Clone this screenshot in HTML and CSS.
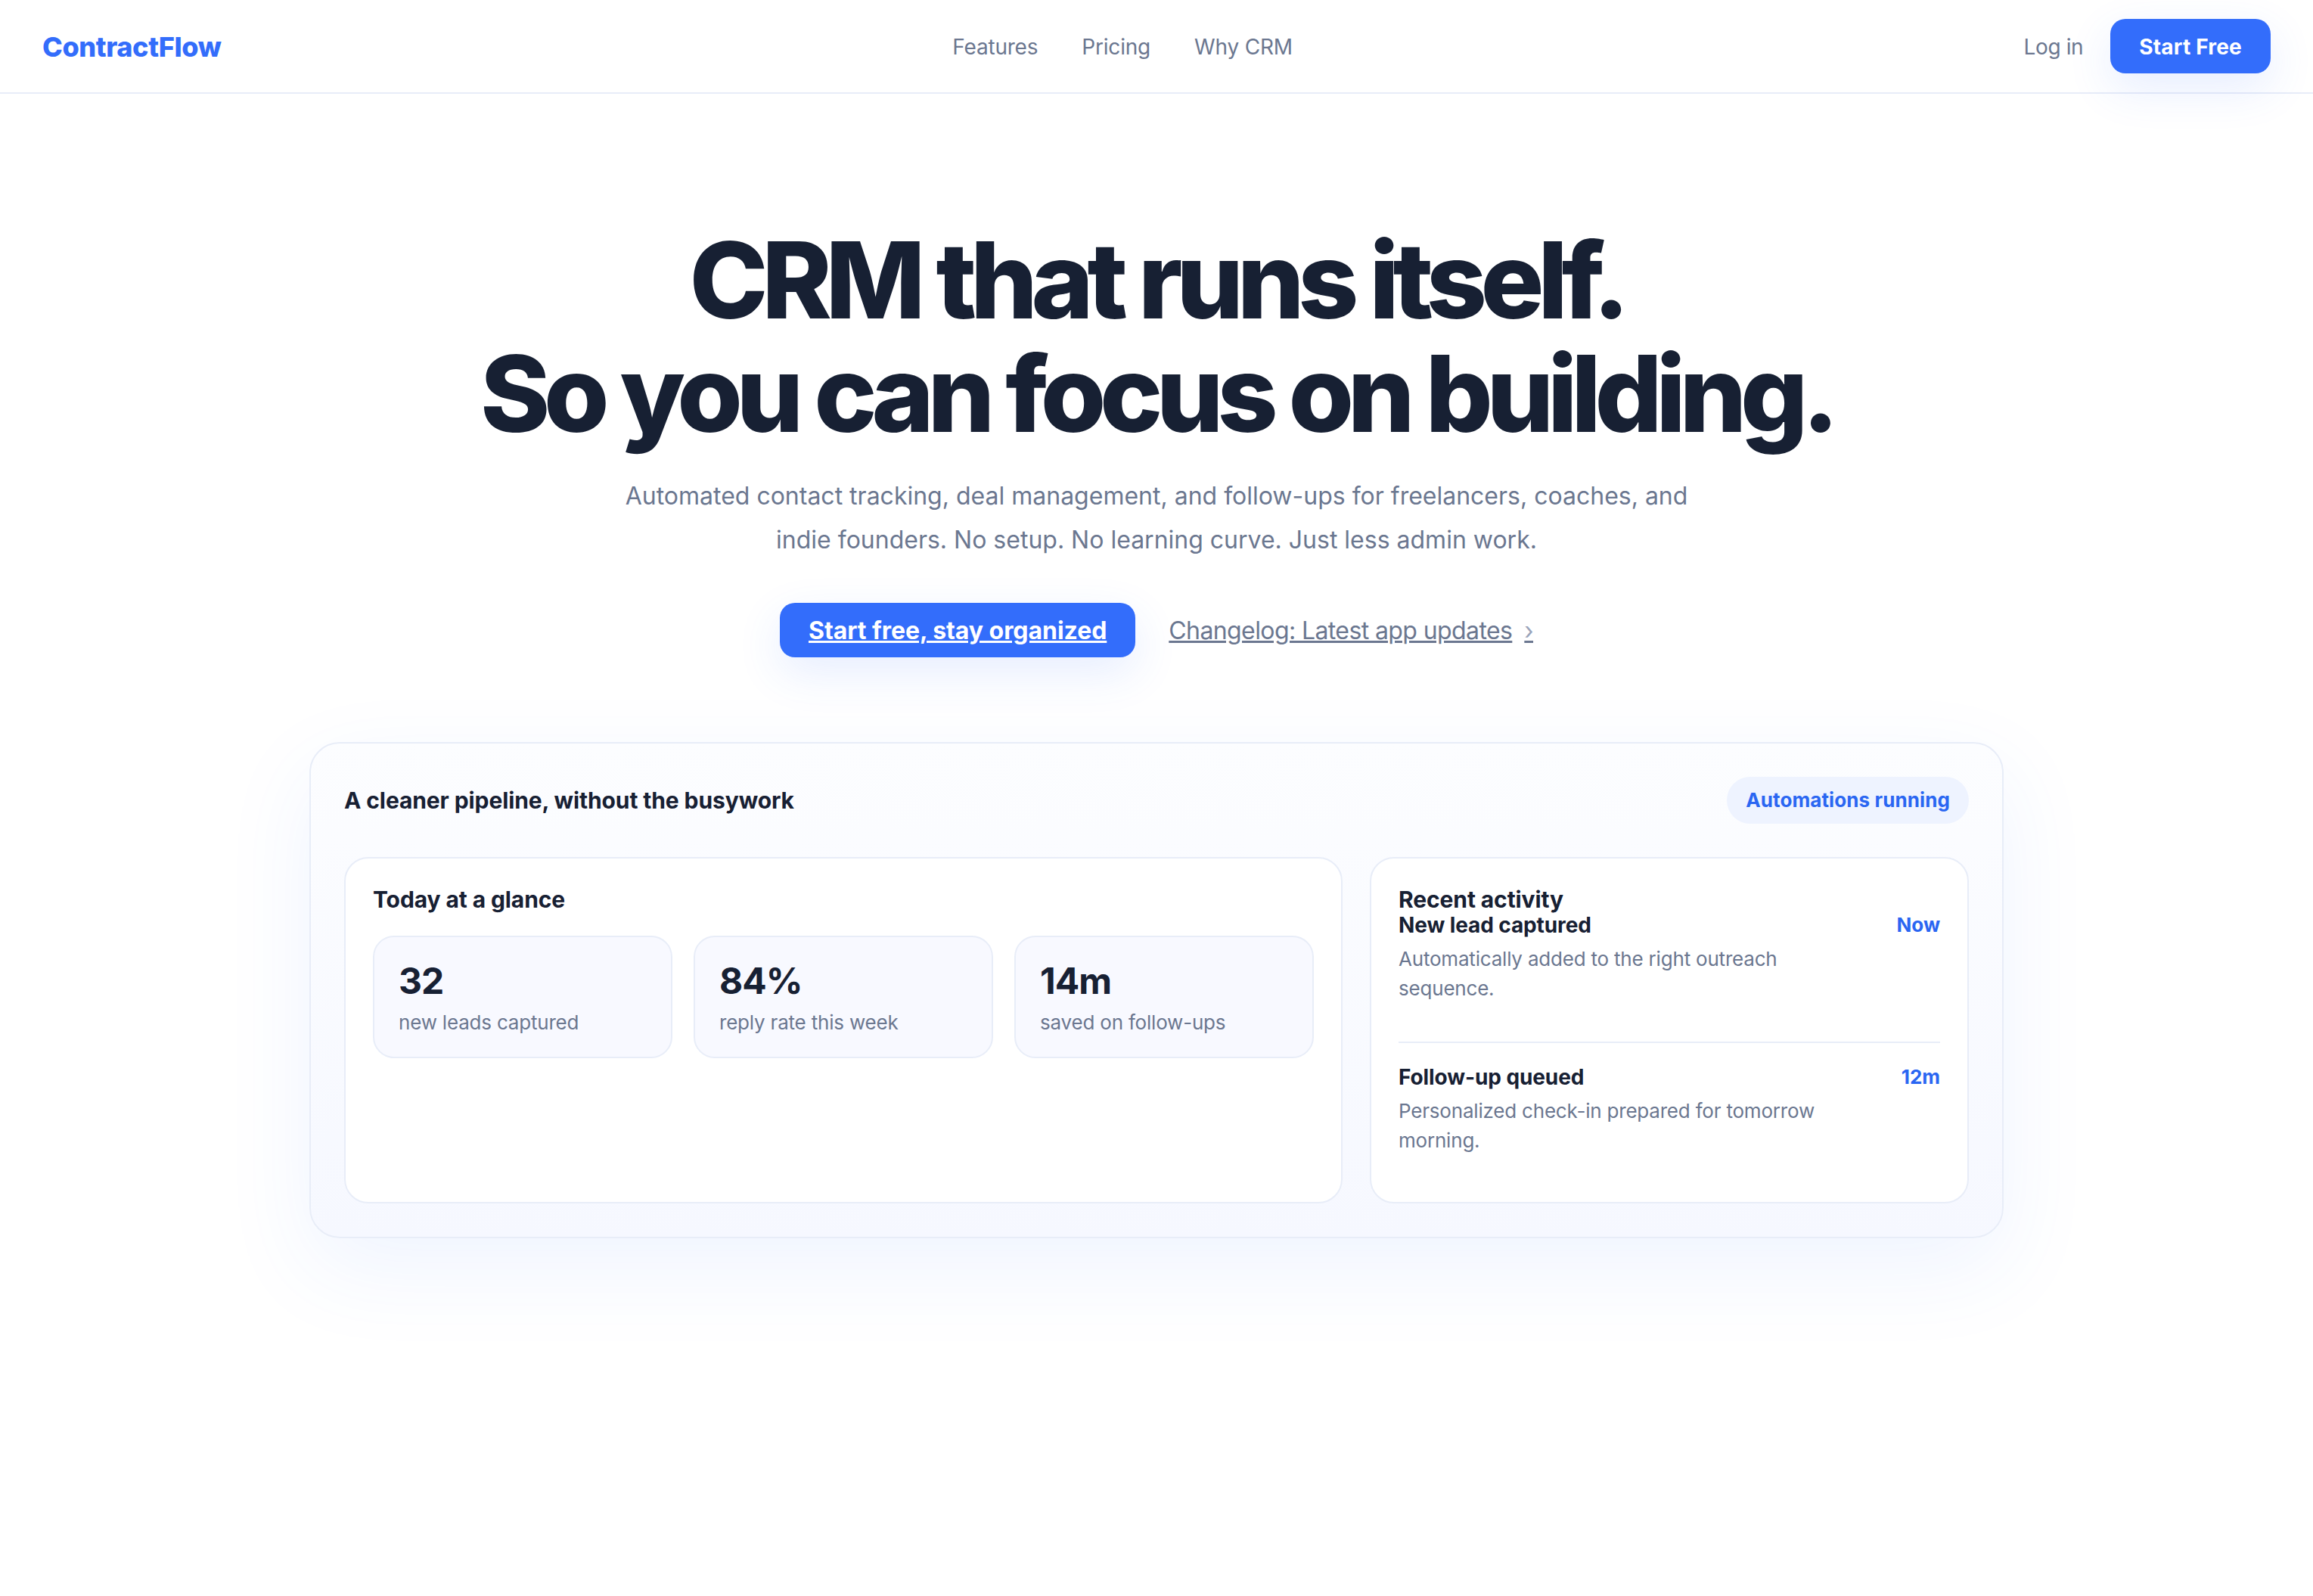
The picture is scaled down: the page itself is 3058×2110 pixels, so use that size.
FILE: index.html
```html
<!DOCTYPE html>
<html lang="en">
<head>
  <meta charset="UTF-8">
  <title>ContractFlow</title>
  <link rel="stylesheet" href="styles.css">
</head>
<body>

<header class="topbar">
  <a class="logo" href="#">ContractFlow</a>
  <nav class="nav">
    <a href="#">Features</a>
    <a href="#">Pricing</a>
    <a href="#">Why CRM</a>
  </nav>
  <div class="top-actions">
    <a class="login" href="#">Log in</a>
    <a class="btn" href="#">Start Free</a>
  </div>
</header>

<main>
  <section class="hero">
    <h1>CRM that runs itself.<br>So you can focus on building.</h1>
    <p class="lead">Automated contact tracking, deal management, and follow-ups for freelancers, coaches, and indie founders. No setup. No learning curve. Just less admin work.</p>
    <div class="cta">
      <a class="btn btn-underline" href="#">Start free, stay organized</a>
      <a class="changelog" href="#">Changelog: Latest app updates<span class="arrow">›</span></a>
    </div>
  </section>

  <section class="board">
    <div class="board-head">
      <div class="board-title">A cleaner pipeline, without the busywork</div>
      <div class="pill">Automations running</div>
    </div>
    <div class="board-grid">
      <div class="panel glance">
        <div class="panel-title">Today at a glance</div>
        <div class="stats">
          <div class="stat"><strong>32</strong><span>new leads captured</span></div>
          <div class="stat"><strong>84%</strong><span>reply rate this week</span></div>
          <div class="stat"><strong>14m</strong><span>saved on follow-ups</span></div>
        </div>
      </div>
      <div class="panel activity">
        <div class="panel-title">Recent activity</div>
        <div class="item">
          <div class="item-text">
            <div class="item-title">New lead captured</div>
            <p>Automatically added to the right outreach sequence.</p>
          </div>
          <div class="time">Now</div>
        </div>
        <div class="item">
          <div class="item-text">
            <div class="item-title">Follow-up queued</div>
            <p>Personalized check-in prepared for tomorrow morning.</p>
          </div>
          <div class="time">12m</div>
        </div>
      </div>
    </div>
  </section>
</main>

</body>
</html>
```

FILE: styles.css
```css
* { box-sizing: border-box; }
html, body { margin: 0; background: #fff; }
body { font-family: Inter, "Noto Sans", sans-serif; color: #172033; min-height: 2110px; }
a { color: inherit; text-decoration: none; }

.topbar { height: 124px; padding: 0 56px; border-bottom: 2px solid #e8edf8; display: flex; justify-content: space-between; align-items: center; }
.logo { padding-top: 2px; font-size: 36px; font-weight: 800; letter-spacing: -0.36px; color: #336dfb; }
.nav { display: flex; gap: 58px; padding-top: 2px; font-size: 28px; letter-spacing: -0.2px; color: #6b7790; }
.top-actions { display: flex; align-items: center; gap: 36px; }
.login { padding-top: 2px; font-size: 28px; letter-spacing: -0.4px; color: #6b7790; }

.btn { display: inline-block; padding: 0 38px; height: 72px; line-height: 74px; border-radius: 20px; background: #336dfb; color: #fff; font-size: 28px; font-weight: 700; letter-spacing: 0.2px; box-shadow: 0 20px 60px rgba(51, 109, 251, 0.12); }
.btn-underline { font-size: 32px; letter-spacing: -0.05px; text-decoration: underline; }

.hero { padding-top: 171px; text-align: center; }
h1 { margin: 0; font-size: 140px; line-height: 150px; font-weight: 800; letter-spacing: -8.4px; color: #172033; }
.lead { width: 1440px; margin: 32px auto 0; font-size: 32px; line-height: 58px; color: #6b7790; }
.cta { margin-top: 54px; display: flex; justify-content: center; align-items: center; gap: 44px; }
.changelog { font-size: 32px; letter-spacing: -0.6px; color: #6b7790; text-decoration: underline; }
.arrow { margin-left: 16px; color: #9aa4ba; }

.board { width: 2240px; margin: 112px auto 0; padding: 44px; border: 2px solid #e8edf8; border-radius: 40px; background: linear-gradient(180deg, #fcfdff, #f6f8ff); box-shadow: 0 40px 120px rgba(51, 109, 251, 0.08); }
.board-head { display: flex; justify-content: space-between; align-items: center; }
.board-title { font-size: 30px; font-weight: 700; letter-spacing: -0.1px; }
.pill { padding: 0 25px; height: 62px; line-height: 62px; border-radius: 31px; background: #eef3ff; color: #2a66f2; font-size: 26px; font-weight: 700; letter-spacing: 0.1px; }
.board-grid { display: grid; grid-template-columns: 1320px 1fr; gap: 36px; margin-top: 44px; }
.panel { height: 458px; padding: 37px 36px 36px; border: 2px solid #e8edf8; border-radius: 32px; background: #fff; }
.panel-title { font-size: 30px; line-height: 34px; font-weight: 700; letter-spacing: -0.1px; }
.stats { display: grid; grid-template-columns: repeat(3, 1fr); gap: 28px; margin-top: 31px; }
.stat { height: 162px; padding: 30px 32px; border: 2px solid #e8edf8; border-radius: 28px; background: #f8f9ff; }
.stat strong { display: block; font-size: 48px; line-height: 56px; font-weight: 700; letter-spacing: -1px; }
.stat span { display: block; margin-top: 9px; font-size: 26px; line-height: 36px; letter-spacing: -0.2px; color: #6b7790; }

.item { display: flex; justify-content: space-between; gap: 40px; }
.item + .item { margin-top: 51px; padding-top: 28px; border-top: 2px solid #e8edf8; }
.item-text { width: 580px; }
.item-title { font-size: 28px; line-height: 34px; font-weight: 700; letter-spacing: -0.1px; }
.item p { margin: 8px 0 0; font-size: 26px; line-height: 39px; letter-spacing: -0.2px; color: #6b7790; }
.time { font-size: 26px; line-height: 34px; font-weight: 700; color: #2a66f2; }
```
